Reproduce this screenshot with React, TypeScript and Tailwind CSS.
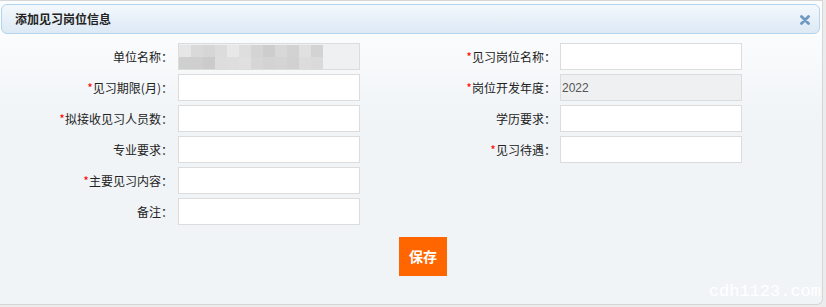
interface Field {
  label: string;
  required?: boolean;
  value?: string;
  disabled?: boolean;
  mosaic?: boolean;
}

const rows: [Field, Field | null][] = [
  [{ label: '单位名称', disabled: true, mosaic: true }, { label: '见习岗位名称', required: true }],
  [{ label: '见习期限(月)', required: true }, { label: '岗位开发年度', required: true, disabled: true, value: '2022' }],
  [{ label: '拟接收见习人员数', required: true }, { label: '学历要求' }],
  [{ label: '专业要求' }, { label: '见习待遇', required: true }],
  [{ label: '主要见习内容', required: true }, null],
  [{ label: '备注' }, null],
];

const mosaicTop = ['#e6e6e6', '#d9d9d9', '#d6d6d6', '#dcdcdc', '#e8e8e8', '#dedede', '#d4d4d4', '#cdcdcd', '#d8d8d8', '#d2d2d2', '#e0e0e0', '#d3d3d3'];
const mosaicBottom = ['#cfcfcf', '#cfcfcf', '#cbcbcb', '#dddddd', '#dedede', '#e0e0e0', '#d6d6d6', '#d3d3d3', '#d4d4d4', '#d1d1d1', '#dcdcdc', '#dadada'];

function Mosaic() {
  return (
    <svg width="144" height="24" className="absolute left-0 top-[1px]">
      {mosaicTop.map((c, i) => (
        <rect key={'t' + i} x={i * 12} y={0} width={12} height={12} fill={c} />
      ))}
      {mosaicBottom.map((c, i) => (
        <rect key={'b' + i} x={i * 12} y={12} width={12} height={12} fill={c} />
      ))}
    </svg>
  );
}

function FieldCell({ field, labelWidth, gap }: { field: Field; labelWidth: string; gap: string }) {
  return (
    <div className="flex items-center">
      <div className={`${labelWidth} text-right text-[12px] text-[#222] whitespace-nowrap`}>
        {field.required && <span className="text-[#ff0000]">*</span>}
        {field.label}：
      </div>
      <div
        className={`${gap} relative w-[182px] h-[27px] border border-[#dcdcdc] overflow-hidden ${
          field.disabled ? 'bg-[#eff0f2]' : 'bg-white'
        }`}
      >
        {field.mosaic && <Mosaic />}
        {field.value && (
          <span className="absolute left-[1px] top-[4px] text-[12px] text-[#555] font-['Liberation_Sans',sans-serif]">
            {field.value}
          </span>
        )}
      </div>
    </div>
  );
}

export default function App() {
  return (
    <div className="w-[826px] h-[307px] bg-[#ececec] font-['Noto_Sans_CJK_SC',sans-serif] overflow-hidden">
      <div className="relative w-[823px] h-[305px] border-r border-b border-t border-[#d6d6d6] rounded-br-[6px] bg-gradient-to-b from-[#fbfcfd] from-[10%] to-[#f0f4f7] to-[40%]">
        <div className="ml-[1px] mr-[2px] mt-[3px] h-[30px] rounded-[6px] border border-[#b4d3ec] bg-gradient-to-b from-[#f3f8fc] to-[#dde9f5] flex items-center justify-between pl-[13px] pr-[9px]">
          <span className="text-[12px] font-bold text-[#222]">添加见习岗位信息</span>
          <svg width="10" height="10" viewBox="0 0 10 10" className="mt-[1px]">
            <path d="M1.5 1.5 L8.5 8.5 M8.5 1.5 L1.5 8.5" stroke="#6f98c0" strokeWidth="2.8" strokeLinecap="round" />
          </svg>
        </div>

        <div className="mt-[9px] flex flex-col gap-[4px]">
          {rows.map(([left, right], i) => (
            <div key={i} className="flex">
              <div className="w-[360px]">
                <FieldCell field={left} labelWidth="w-[173px]" gap="ml-[5px]" />
              </div>
              {right && <FieldCell field={right} labelWidth="w-[196px]" gap="ml-[4px]" />}
            </div>
          ))}
        </div>

        <div className="flex justify-center mt-[12px] pl-[24px]">
          <button className="w-[48px] h-[39px] bg-[#ff6600] text-white text-[14px] font-bold">保存</button>
        </div>

        <div className="absolute right-[1px] bottom-[4px] text-[17px] text-white font-['Liberation_Mono',monospace] leading-none">
          cdh1123.com
        </div>
      </div>
    </div>
  );
}
